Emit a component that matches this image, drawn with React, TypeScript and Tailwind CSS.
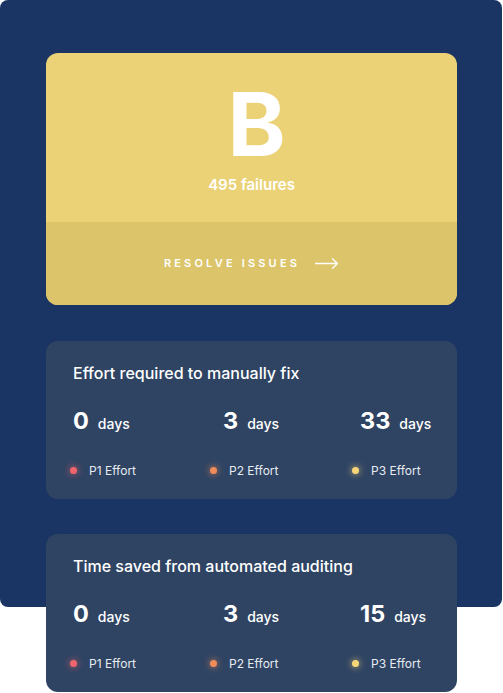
import React from "react";

const font = { fontFamily: "Inter, 'Noto Sans', sans-serif" };

function Stat({ value, w }: { value: string; w: string }) {
  return (
    <div className={`flex items-baseline ${w}`}>
      <span className="text-[23.5px] font-bold leading-none text-white">{value}</span>
      <span className="ml-[9px] text-[14px] font-medium leading-none text-white">days</span>
    </div>
  );
}

function Legend({ label, dot, glow, w }: { label: string; dot: string; glow: string; w: string }) {
  return (
    <div className={`flex items-center ${w}`}>
      <span className={`h-[7px] w-[7px] rounded-full ${dot} ${glow}`} />
      <span className="ml-[12px] text-[12px] font-normal leading-none text-[#e6ebf2]">{label}</span>
    </div>
  );
}

function EffortCard({ title, values }: { title: string; values: [string, string, string] }) {
  return (
    <div className="h-[158px] w-[411px] rounded-[12px] bg-[#2f4463] pt-[23px]">
      <div className="pl-[27px] text-[16px] font-medium leading-[18px] text-white">{title}</div>
      <div className="mt-[27px] flex pl-[27px]">
        <Stat value={values[0]} w="w-[150px]" />
        <Stat value={values[1]} w="w-[137px]" />
        <Stat value={values[2]} w="" />
      </div>
      <div className="mt-[32px] flex pl-[24px]">
        <Legend label="P1 Effort" dot="bg-[#f0646e]" glow="shadow-[0_0_6px_1px_rgba(240,100,110,0.55)]" w="w-[140px]" />
        <Legend label="P2 Effort" dot="bg-[#f08c5a]" glow="shadow-[0_0_6px_1px_rgba(240,140,90,0.55)]" w="w-[142px]" />
        <Legend label="P3 Effort" dot="bg-[#f7d67a]" glow="shadow-[0_0_6px_1px_rgba(247,214,122,0.55)]" w="" />
      </div>
    </div>
  );
}

export default function App() {
  return (
    <div className="min-h-[693px] w-[503px] bg-white" style={font}>
      <div className="h-[607px] w-[502px] rounded-[8px] bg-[#1a3564] pl-[46px] pt-[53px]">
        <div className="w-[411px] overflow-hidden rounded-[12px] bg-[#ebd277]">
          <div className="flex h-[169px] flex-col items-center pt-[29px]">
            <div className="ml-[10px] text-[88px] font-bold leading-[84px] text-white">B</div>
            <div className="mt-[10px] text-[15px] font-semibold leading-[18px] text-white">495 failures</div>
          </div>
          <div className="flex h-[83px] items-center justify-center bg-[#dcc46a]">
            <span className="text-[11px] font-semibold tracking-[0.29em] text-white">RESOLVE ISSUES</span>
            <svg className="ml-[15px]" width="24" height="11" viewBox="0 0 24 11" fill="none">
              <path d="M0 5.5H22.5M17.5 0.8L22.5 5.5L17.5 10.2" stroke="white" strokeWidth="1.3" strokeLinecap="round" strokeLinejoin="round" />
            </svg>
          </div>
        </div>
        <div className="mt-[36px]">
          <EffortCard title="Effort required to manually fix" values={["0", "3", "33"]} />
        </div>
        <div className="mt-[35px]">
          <EffortCard title="Time saved from automated auditing" values={["0", "3", "15"]} />
        </div>
      </div>
    </div>
  );
}
